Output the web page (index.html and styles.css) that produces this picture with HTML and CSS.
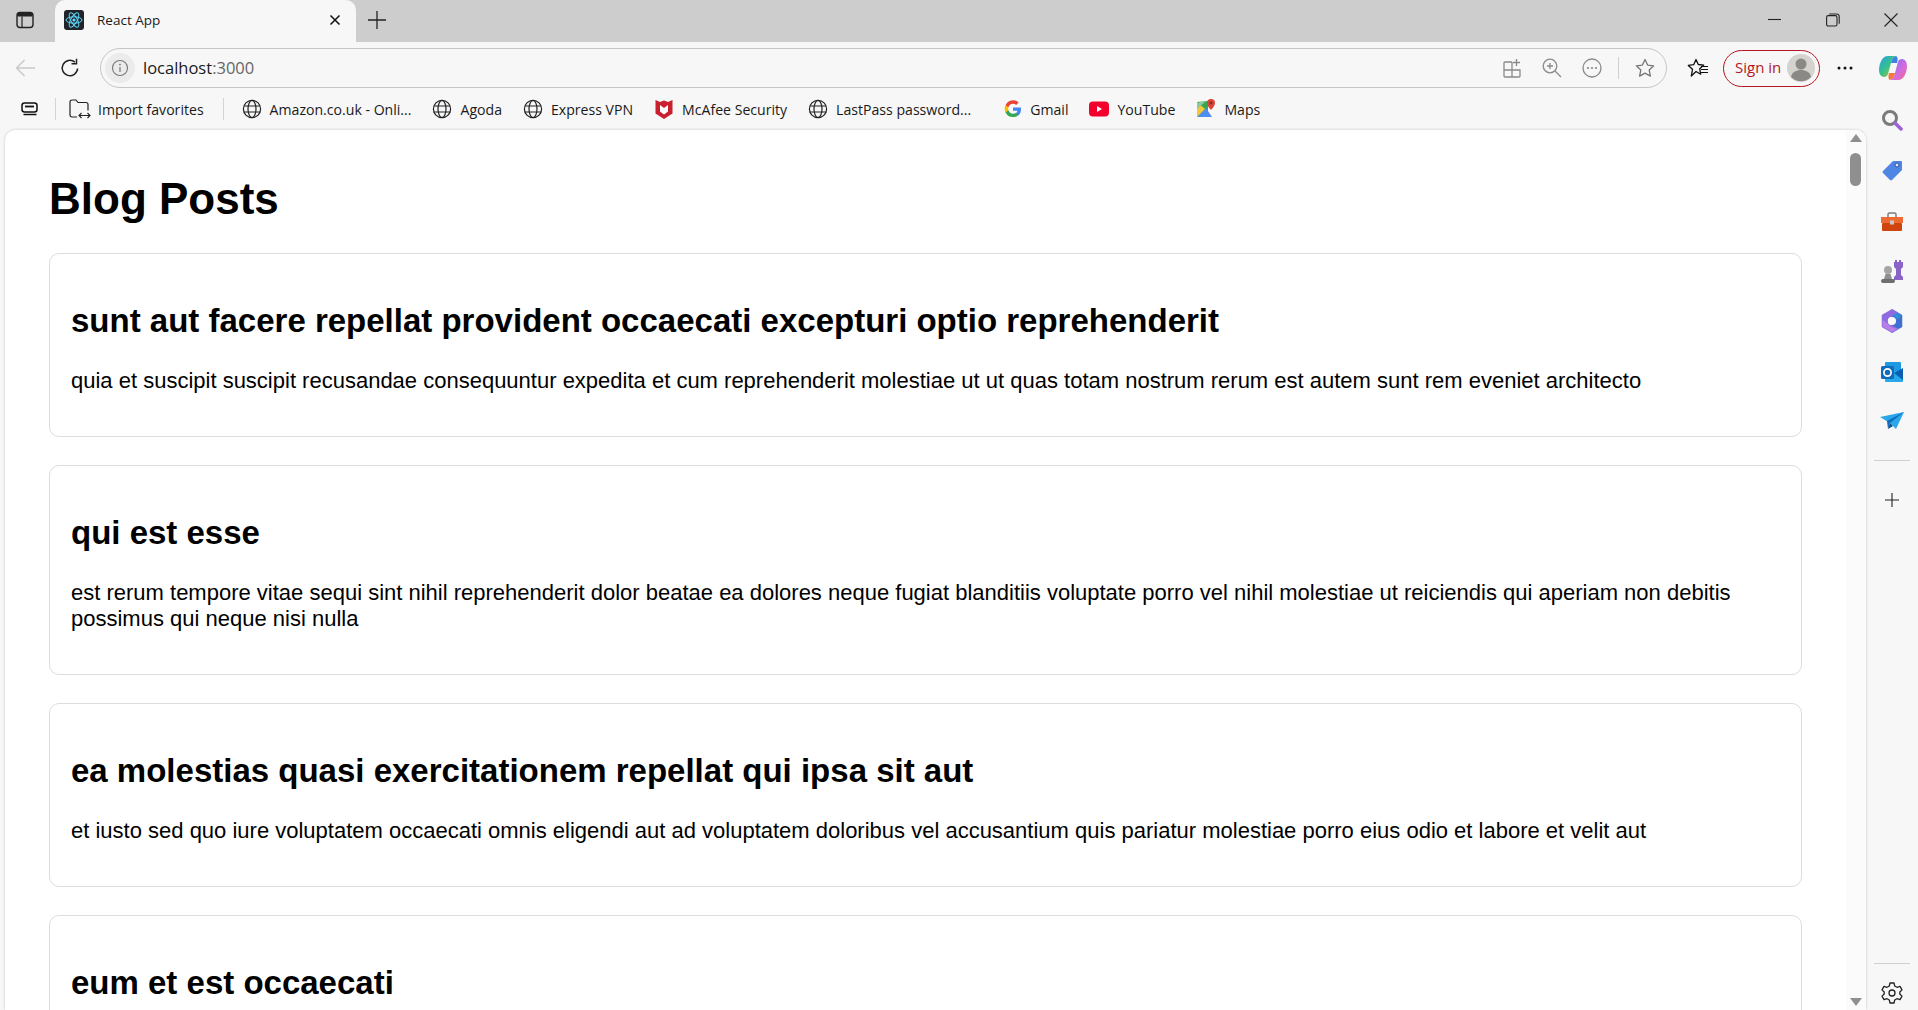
FILE: index.html
```html
<!DOCTYPE html>
<html>
<head>
<meta charset="utf-8">
<title>React App</title>
<link rel="stylesheet" href="styles.css">
</head>
<body>
<svg class="defs" width="0" height="0">
  <symbol id="globe" viewBox="0 0 20 20">
    <g fill="none" stroke="#222" stroke-width="1.2">
      <circle cx="10" cy="10" r="8.6"/>
      <ellipse cx="10" cy="10" rx="4" ry="8.6"/>
      <path d="M1.8 7h16.4M1.8 13h16.4"/>
    </g>
  </symbol>
</svg>

<div class="tabbar">
  <svg class="tabs-btn" width="18" height="18" viewBox="0 0 18 18"><rect x="1" y="1.5" width="16" height="15" rx="3" fill="none" stroke="#222" stroke-width="1.4"/><path d="M1.500 5.500h15v-1a3 3 0 0 0-3-3h-9a3 3 0 0 0-3 3z" fill="#222"/><path d="M6 5.500v10.500" stroke="#222" stroke-width="1.200"/></svg>
  <div class="tab">
    <svg class="favicon" width="20" height="20" viewBox="0 0 20 20"><rect width="20" height="20" rx="3" fill="#20232a"/><g fill="none" stroke="#61dafb" stroke-width="1"><ellipse cx="10" cy="10" rx="8" ry="3.2"/><ellipse cx="10" cy="10" rx="8" ry="3.2" transform="rotate(60 10 10)"/><ellipse cx="10" cy="10" rx="8" ry="3.2" transform="rotate(120 10 10)"/></g><circle cx="10" cy="10" r="1.6" fill="#61dafb"/></svg>
    <span class="tab-title">React App</span>
    <svg class="tab-close" width="12" height="12" viewBox="0 0 12 12"><path d="M1.5 1.5l9 9M10.5 1.5l-9 9" stroke="#111" stroke-width="1.5"/></svg>
  </div>
  <svg class="new-tab" width="18" height="18" viewBox="0 0 18 18"><path d="M9 0v18M0 9h18" stroke="#222" stroke-width="1.3"/></svg>
  <div class="win-btns">
    <svg width="14" height="14" viewBox="0 0 14 14"><path d="M0 6.500h13" stroke="#222" stroke-width="1.100"/></svg>
    <svg width="14" height="14" viewBox="0 0 14 14"><rect x=".6" y="2.600" width="10.400" height="10.400" rx="1.600" fill="none" stroke="#222" stroke-width="1.100"/><path d="M3.200 1h7.600a2.400 2.400 0 0 1 2.400 2.400v7.400" fill="none" stroke="#222" stroke-width="1.100"/></svg>
    <svg width="14" height="14" viewBox="0 0 14 14"><path d="M.5.5l13 13M13.500.5l-13 13" stroke="#222" stroke-width="1.100"/></svg>
  </div>
</div>

<div class="toolbar">
  <svg class="back" width="20" height="18" viewBox="0 0 20 18"><path d="M20 9H1.500M9.500 1l-8 8 8 8" fill="none" stroke="#c9c9c9" stroke-width="1.400"/></svg>
  <svg class="reload" width="20" height="20" viewBox="0 0 20 20"><path d="M17.600 10.500a7.700 7.700 0 1 1-2.700-6.400" fill="none" stroke="#222" stroke-width="1.500"/><path d="M16.500 .8v5h-5" fill="none" stroke="#222" stroke-width="1.500"/></svg>
  <div class="addressbar">
    <span class="site-info"><svg width="18" height="18" viewBox="0 0 18 18"><circle cx="9" cy="9" r="7.500" fill="none" stroke="#777" stroke-width="1.100"/><path d="M9 8v5" stroke="#777" stroke-width="1.200"/><circle cx="9" cy="5.600" r=".9" fill="#777"/></svg></span>
    <span class="url">localhost<span class="url-port">:3000</span></span>
    <div class="addr-icons">
      <svg width="20" height="20" viewBox="0 0 20 20"><g fill="none" stroke="#8a8a8a" stroke-width="1.300"><path d="M10 4H3a1 1 0 0 0-1 1v13a1 1 0 0 0 1 1h14a1 1 0 0 0 1-1v-6H2M10 4v15M14.500 1v7M11 4.500h7"/></g></svg>
      <svg width="20" height="20" viewBox="0 0 20 20"><g fill="none" stroke="#8a8a8a" stroke-width="1.300"><circle cx="8" cy="8" r="6.800"/><path d="M13 13l6 6M8 5v6M5 8h6"/></g></svg>
      <svg width="20" height="20" viewBox="0 0 20 20"><circle cx="10" cy="10" r="9" fill="none" stroke="#8a8a8a" stroke-width="1.300"/><g fill="#8a8a8a"><circle cx="6" cy="10" r="1.100"/><circle cx="10" cy="10" r="1.100"/><circle cx="14" cy="10" r="1.100"/></g></svg>
      <span class="addr-sep"></span>
      <svg width="20" height="20" viewBox="0 0 20 20"><path d="M10 1.500l2.600 5.600 6.100.7-4.500 4.200 1.200 6.100-5.400-3-5.400 3 1.200-6.100-4.500-4.200 6.100-.7z" fill="none" stroke="#777" stroke-width="1.300" stroke-linejoin="round"/></svg>
    </div>
  </div>
  <svg class="favs" width="22" height="20" viewBox="0 0 22 20"><path d="M9 1.500l2.300 5 5.400.6-4 3.700 1 5.400L9 13.500l-4.700 4.500 1.200-6.700-4.200-3.900 5.400-.7z" fill="none" stroke="#111" stroke-width="1.300" stroke-linejoin="round"/><path d="M14 8.500h7M14 11.500h7M14 14.500h7" stroke="#111" stroke-width="1.100"/></svg>
  <div class="signin">
    <span class="signin-text">Sign in</span>
    <svg width="28" height="28" viewBox="0 0 28 28"><circle cx="14" cy="14" r="14" fill="#d5d3ce"/><circle cx="14" cy="10" r="5.500" fill="#8b8985"/><path d="M4 23c1-5 5-7 10-7s9 2 10 7a14 14 0 0 1-20 0z" fill="#8b8985"/></svg>
  </div>
  <svg class="more" width="16" height="4" viewBox="0 0 16 4"><g fill="#111"><circle cx="2" cy="2" r="1.500"/><circle cx="8" cy="2" r="1.500"/><circle cx="14" cy="2" r="1.500"/></g></svg>
  <svg class="copilot" width="28" height="26" viewBox="0 0 28 26">
    <defs>
      <linearGradient id="cpa" x1="0" y1="0" x2="1" y2="1"><stop offset="0" stop-color="#2b9fe8"/><stop offset=".5" stop-color="#35c28a"/><stop offset="1" stop-color="#f2b01e"/></linearGradient>
      <linearGradient id="cpb" x1="0" y1="0" x2="1" y2="1"><stop offset="0" stop-color="#7b6cf0"/><stop offset=".6" stop-color="#d66be0"/><stop offset="1" stop-color="#f06a7a"/></linearGradient>
    </defs>
    <path d="M9 1h8c-3 1-4 3-5 7l-3 11c-.5 2-2 3-4 3-3 0-5-3-5-7 0-6 3-14 9-14z" fill="url(#cpa)"/>
    <path d="M19 25h-8c3-1 4-3 5-7l3-11c.5-2 2-3 4-3 3 0 5 3 5 7 0 6-3 14-9 14z" fill="url(#cpb)"/>
    <path d="M17 1c-3 1-4 3-5 7h6c.8-3 1-6-1-7z" fill="#3f7fe8"/>
    <path d="M11 25c3-1 4-3 5-7h-6c-.8 3-1 6 1 7z" fill="#f5783c"/>
  </svg>
</div>

<div class="lower">
  <div class="left">
    <div class="bookmarks">
      <svg class="bm-collections" width="18" height="14" viewBox="0 0 18 14"><rect x="1" y="1" width="15" height="9" rx="2.500" fill="none" stroke="#111" stroke-width="1.500"/><path d="M4 4.500h9" stroke="#111" stroke-width="1.800"/><path d="M2.500 12.500h13" stroke="#111" stroke-width="1.500"/></svg>
      <span class="bm-sep"></span>
      <div class="bm bm-import">
        <svg width="22" height="20" viewBox="0 0 22 20"><path d="M8 18H3a2 2 0 0 1-2-2V3a2 2 0 0 1 2-2h4l2 2.500h8a2 2 0 0 1 2 2v6" fill="none" stroke="#222" stroke-width="1.200"/><path d="M10 16.500h11M12.500 14l-2.500 2.500 2.500 2.500M18.500 14l2.500 2.500-2.500 2.500" fill="none" stroke="#222" stroke-width="1.100"/></svg>
        <span>Import favorites</span>
      </div>
      <span class="bm-sep"></span>
      <div class="bm bm-first"><svg width="20" height="20"><use href="#globe"/></svg><span>Amazon.co.uk - Onli...</span></div>
      <div class="bm"><svg width="20" height="20"><use href="#globe"/></svg><span>Agoda</span></div>
      <div class="bm"><svg width="20" height="20"><use href="#globe"/></svg><span>Express VPN</span></div>
      <div class="bm"><svg width="20" height="22" viewBox="0 0 20 22"><path d="M1.500 2l4.500 2 4-1.500 4 1.500 4.500-2v13.500L10 21l-8.500-5.500z" fill="#c8202f"/><path d="M6 7l4 3 4-3v6.500l-4 3-4-3z" fill="#fff"/></svg><span>McAfee Security</span></div>
      <div class="bm bm-lastpass"><svg width="20" height="20"><use href="#globe"/></svg><span>LastPass password...</span></div>
      <div class="bm"><svg width="18" height="18" viewBox="0 0 18 18"><path d="M17 9.200c0-.6 0-1.100-.1-1.600H9v3.100h4.500a3.900 3.900 0 0 1-1.700 2.500v2.100h2.700c1.600-1.400 2.500-3.500 2.500-6.100z" fill="#4285f4"/><path d="M9 17c2.200 0 4.100-.7 5.500-2l-2.700-2.100c-.7.500-1.700.8-2.800.8-2.200 0-4-1.500-4.600-3.400H1.600v2.200A8 8 0 0 0 9 17z" fill="#34a853"/><path d="M4.400 10.300a4.800 4.800 0 0 1 0-3V5.100H1.600a8 8 0 0 0 0 7.400z" fill="#fbbc05"/><path d="M9 3.800c1.200 0 2.300.4 3.200 1.200l2.400-2.400A8 8 0 0 0 1.600 5.100l2.800 2.200C5 5.300 6.800 3.800 9 3.800z" fill="#ea4335"/></svg><span>Gmail</span></div>
      <div class="bm"><svg width="20" height="16" viewBox="0 0 20 16"><rect width="20" height="15" y=".5" rx="4" fill="#f4002c"/><path d="M8 5v6l5-3z" fill="#fff"/></svg><span>YouTube</span></div>
      <div class="bm"><svg width="20" height="20" viewBox="0 0 20 20"><path d="M1 3l11-1v16H1z" fill="#35a853"/><path d="M1 18l9-9 6 9z" fill="#4d8ef0"/><path d="M1 3l8 7-8 8z" fill="#f5c63a"/><path d="M4 3h5L1 10V5z" fill="#8fc7a0"/><path d="M15 0a4 4 0 0 1 4 4c0 3-4 7-4 7s-4-4-4-7a4 4 0 0 1 4-4z" fill="#db4437"/><circle cx="15" cy="4" r="1.400" fill="#8c2a22"/></svg><span>Maps</span></div>
    </div>

    <div class="viewport">
      <div class="page">
        <h1>Blog Posts</h1>
        <div class="post">
          <h2>sunt aut facere repellat provident occaecati excepturi optio reprehenderit</h2>
          <p>quia et suscipit suscipit recusandae consequuntur expedita et cum reprehenderit molestiae ut ut quas totam nostrum rerum est autem sunt rem eveniet architecto</p>
        </div>
        <div class="post">
          <h2>qui est esse</h2>
          <p>est rerum tempore vitae sequi sint nihil reprehenderit dolor beatae ea dolores neque fugiat blanditiis voluptate porro vel nihil molestiae ut reiciendis qui aperiam non debitis possimus qui neque nisi nulla</p>
        </div>
        <div class="post">
          <h2>ea molestias quasi exercitationem repellat qui ipsa sit aut</h2>
          <p>et iusto sed quo iure voluptatem occaecati omnis eligendi aut ad voluptatem doloribus vel accusantium quis pariatur molestiae porro eius odio et labore et velit aut</p>
        </div>
        <div class="post">
          <h2>eum et est occaecati</h2>
        </div>
      </div>
      <div class="scrollbar">
        <span class="arrow-up"></span>
        <span class="thumb"></span>
        <span class="arrow-down"></span>
      </div>
    </div>
  </div>

  <div class="sidebar">
    <span class="side-icon"><svg width="22" height="22" viewBox="0 0 22 22"><circle cx="9" cy="9" r="6.500" fill="none" stroke="#7b7b7b" stroke-width="3"/><path d="M14 14l6 6" stroke="#9a63d8" stroke-width="3.500" stroke-linecap="round"/></svg></span>
    <span class="side-icon"><svg width="22" height="22" viewBox="0 0 22 22"><path d="M2 12L12 2h8a1 1 0 0 1 1 1v8L11 21a1.500 1.500 0 0 1-2 0l-7-7a1.500 1.500 0 0 1 0-2z" fill="#4f86e6"/><circle cx="16" cy="6" r="2" fill="#dfe9fb" stroke="#2b4f9e"/></svg></span>
    <span class="side-icon"><svg width="24" height="24" viewBox="0 -4 24 24"><path d="M8 5V2.500A1.500 1.500 0 0 1 9.500 1h5A1.500 1.500 0 0 1 16 2.500V5" fill="none" stroke="#7d7d7d" stroke-width="1.500"/><rect x="1" y="5" width="22" height="6" fill="#ef6a32"/><rect x="2" y="11" width="20" height="8" rx="1" fill="#cf4510"/><rect x="10" y="8.500" width="4" height="4" fill="#c9c9c9"/></svg></span>
    <span class="side-icon"><svg width="24" height="24" viewBox="0 0 24 24"><path d="M15 1h2v2h2V1h2v2h2v5l-2 2v6l2 2v3h-9v-3l2-2v-6l-2-2V3h1z" fill="#8a63c9"/><circle cx="8" cy="11" r="4" fill="#a5a5a5"/><path d="M5.500 15h5l1.500 5H4z" fill="#8f8f8f"/><rect x="1" y="20" width="14" height="4" rx="2" fill="#6f6f6f"/></svg></span>
    <span class="side-icon"><svg width="22" height="24" viewBox="0 0 22 24"><path d="M11 1l9.500 5.500v11L11 23z" fill="#3f6fd0" stroke="#3f6fd0" stroke-width="1.500" stroke-linejoin="round"/><path d="M11 1L1.500 6.500v11L11 23l5-3-5-3a5 5 0 0 1 0-10l5-3z" fill="#8d6be0" stroke="#8d6be0" stroke-width="1.500" stroke-linejoin="round"/><path d="M1.500 11v6.500L11 23l7-4c-3 1-7 0-10-3-2-2-4-4-6.500-5z" fill="#b77fe8"/><path d="M20.500 6.500L16 4l-5 3a5 5 0 0 1 5 4z" fill="#2f8fd8"/><circle cx="11" cy="12" r="4" fill="#fbfbfb"/></svg></span>
    <span class="side-icon"><svg width="22" height="21" viewBox="0 0 22 21"><rect x="4" y="1" width="16" height="18" rx="1" fill="#1f9ae0"/><path d="M4 10h18v10a1 1 0 0 1-1 1H5a1 1 0 0 1-1-1z" fill="#28a8ea"/><path d="M13 12l9-5v12z" fill="#0a5fb0"/><rect y="5" width="13" height="13" rx="1.500" fill="#0f6cbd"/><circle cx="6.500" cy="11.500" r="3.600" fill="none" stroke="#fff" stroke-width="1.700"/></svg></span>
    <span class="side-icon"><svg width="24" height="18" viewBox="0 0 24 18"><path d="M0 5l24-5-8 17-6-6z" fill="#28a8ea"/><path d="M7 9l17-9-14 11-2 6z" fill="#0f6cbd"/><path d="M10 11l-2 6 5-3z" fill="#0b4f8a"/></svg></span>
    <span class="side-sep"></span>
    <svg class="side-plus" width="14" height="14" viewBox="0 0 14 14"><path d="M7 0v14M0 7h14" stroke="#222" stroke-width="1.100"/></svg>
    <span class="side-sep side-sep-bottom"></span>
    <svg class="side-gear" width="22" height="22" viewBox="0 0 22 22"><path d="M9 1h4l.7 3 2.300 1.300 3-.9 2 3.500-2.200 2.100v2l2.200 2.100-2 3.500-3-.9L13.700 18 13 21H9l-.7-3L6 16.700l-3 .9-2-3.500L3.200 12v-2L1 7.900l2-3.500 3 .9L8.300 4z" fill="none" stroke="#222" stroke-width="1.300" stroke-linejoin="round"/><circle cx="11" cy="11" r="3" fill="none" stroke="#222" stroke-width="1.300"/></svg>
  </div>
</div>
</body>
</html>
```

FILE: styles.css
```css
html, body {
	margin: 0;
	height: 100%;
	overflow: hidden;
}
body {
	display: flex;
	flex-direction: column;
	background: #f7f7f7;
	font-family: "Open Sans", sans-serif;
	color: #1a1a1a;
}
.defs {
	display: none;
}

/* tabs */
.tabbar {
	height: 42px;
	flex: none;
	display: flex;
	align-items: center;
	background: #cdcdcd;
}
.tabs-btn {
	margin-left: 16px;
	margin-bottom: 2px;
}
.tab {
	margin-left: 21px;
	width: 301px;
	height: 42px;
	box-sizing: border-box;
	display: flex;
	align-items: center;
	padding: 0 15px 2px 9px;
	background: #f7f7f7;
	border-radius: 10px 10px 0 0;
}
.tab-title {
	margin-left: 13px;
	flex: 1;
	font-size: 13.500px;
}
.new-tab {
	margin-left: 12px;
	margin-bottom: 2px;
}
.win-btns {
	margin-left: auto;
	margin-right: 20px;
	display: flex;
	gap: 44px;
	margin-bottom: 2px;
}

/* address row */
.toolbar {
	height: 46px;
	flex: none;
	box-sizing: border-box;
	padding-top: 6px;
	display: flex;
	align-items: center;
}
.back {
	margin-left: 15px;
}
.reload {
	margin-left: 25px;
}
.addressbar {
	margin-left: 20px;
	width: 1567px;
	height: 40px;
	box-sizing: border-box;
	display: flex;
	align-items: center;
	border: 1.500px solid #c6c6c6;
	border-radius: 20px;
	padding: 0 11px 0 4px;
}
.site-info {
	width: 30px;
	height: 30px;
	border-radius: 50%;
	background: #ebebeb;
	display: flex;
	align-items: center;
	justify-content: center;
}
.url {
	margin-left: 8px;
	padding-bottom: 2px;
	font-size: 16.500px;
}
.url-port {
	color: #666;
}
.addr-icons {
	margin-left: auto;
	display: flex;
	align-items: center;
	gap: 20px;
}
.addr-sep {
	width: 1px;
	height: 22px;
	background: #d0d0d0;
	margin: 0 -4px;
}
.favs {
	margin-left: 20px;
}
.signin {
	margin-left: 14px;
	width: 97px;
	height: 37px;
	box-sizing: border-box;
	display: flex;
	align-items: center;
	justify-content: space-between;
	padding: 0 4px 0 11px;
	border: 1.500px solid #b3161f;
	border-radius: 19px;
	color: #b3161f;
	font-size: 15px;
}
.signin-text {
	padding-bottom: 2px;
}
.more {
	margin-left: 17px;
}
.copilot {
	margin-left: 26px;
}

/* below the address row */
.lower {
	flex: 1;
	min-height: 0;
	display: flex;
}
.left {
	width: 1866px;
	flex: none;
	display: flex;
	flex-direction: column;
}

/* favorites row */
.bookmarks {
	height: 42px;
	flex: none;
	display: flex;
	align-items: center;
	font-size: 14.100px;
}
.bm-collections {
	margin-left: 21px;
}
.bm-sep {
	width: 1px;
	height: 22px;
	background: #d4d4d4;
	margin-left: 16px;
}
.bm {
	display: flex;
	align-items: center;
	gap: 8px;
	margin-left: 21px;
}
.bm-import {
	margin-left: 13px;
	gap: 7px;
}
.bm-import + .bm-sep {
	margin-left: 19px;
}
.bm-first {
	margin-left: 18px;
}
.bm-lastpass {
	margin-right: 12px;
}

/* page area */
.viewport {
	flex: 1;
	min-height: 0;
	margin-left: 5px;
	display: flex;
	background: #fff;
	border-radius: 10px 10px 0 0;
	box-shadow: 0 0 3px rgba(0, 0, 0, .2);
	overflow: hidden;
}
.page {
	flex: 1;
	min-width: 0;
	box-sizing: border-box;
	padding: 0 44px;
	font-family: "Liberation Sans", Arial, sans-serif;
	color: #000;
}
.page h1 {
	margin: 44px 0 29px;
	font-size: 44px;
	line-height: 50px;
}
.post {
	border: 1.500px solid #ddd;
	border-radius: 10px;
	padding: 0 21px;
	margin-bottom: 28px;
}
.post h2 {
	margin: 48px 0 28px;
	font-size: 33px;
	line-height: 38px;
}
.post p {
	margin: 0 0 42px;
	font-size: 22px;
	line-height: 26px;
}
.scrollbar {
	width: 20px;
	flex: none;
	position: relative;
	background: #fbfbfb;
}
.arrow-up, .arrow-down {
	position: absolute;
	left: 4px;
	width: 0;
	height: 0;
	border: 6px solid transparent;
}
.arrow-up {
	top: 4px;
	border-bottom: 8px solid #8f8f8f;
	border-top: 0;
}
.arrow-down {
	bottom: 4px;
	border-top: 8px solid #8f8f8f;
	border-bottom: 0;
}
.thumb {
	position: absolute;
	top: 23px;
	left: 4px;
	width: 11px;
	height: 33px;
	border-radius: 6px;
	background: #8f8f8f;
}

/* right hand strip */
.sidebar {
	flex: 1;
	display: flex;
	flex-direction: column;
	align-items: center;
	padding: 7px 0 6px;
}
.side-icon {
	height: 50.200px;
	flex: none;
	display: flex;
	align-items: center;
}
.side-sep {
	width: 36px;
	height: 1px;
	flex: none;
	background: #d0d0d0;
	margin-top: 14px;
}
.side-plus {
	margin-top: 32px;
}
.side-sep-bottom {
	margin-top: auto;
	margin-bottom: 18px;
}
```
